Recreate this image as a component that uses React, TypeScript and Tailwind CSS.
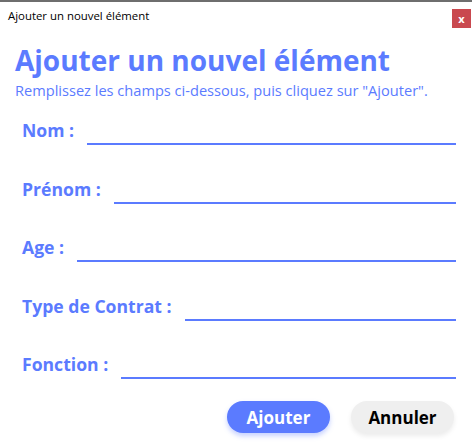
import React, { useState } from 'react';

interface Champ {
  key: string;
  label: string;
}

const champs: Champ[] = [
  { key: 'nom', label: 'Nom :' },
  { key: 'prenom', label: 'Prénom :' },
  { key: 'age', label: 'Age :' },
  { key: 'contrat', label: 'Type de Contrat :' },
  { key: 'fonction', label: 'Fonction :' },
];

export default function App() {
  const [valeurs, setValeurs] = useState<Record<string, string>>({});

  return (
    <div className="w-[472px] h-[446px] bg-white border-t-2 border-[#6e6e6e] font-['Open_Sans',sans-serif] overflow-hidden">
      {/* Barre de titre */}
      <div className="flex items-start justify-between h-[26px] pl-[8px] pr-[1px] pt-[7px]">
        <span className="text-[11.4px] leading-[14px] text-black">Ajouter un nouvel élément</span>
        <button className="w-[19px] h-[19px] bg-[#c9494f] text-white text-[11px] font-bold leading-none flex items-center justify-center">
          x
        </button>
      </div>

      <div className="px-[15px]">
        <h1 className="text-[28px] leading-[36px] font-bold text-[#5b7bff] mt-[14px]">Ajouter un nouvel élément</h1>
        <p className="text-[14.6px] leading-[18px] text-[#5b7bff] mt-[3px]">
          Remplissez les champs ci-dessous, puis cliquez sur "Ajouter".
        </p>

        <div className="flex flex-col gap-[36.6px] mt-[20px] pl-[7px] pr-[1px]">
          {champs.map((c) => (
            <div key={c.key} className="flex items-end gap-[13px] h-[22px]">
              <label className="text-[17.6px] leading-[22px] font-bold text-[#5b7bff] whitespace-nowrap">{c.label}</label>
              <input
                value={valeurs[c.key] ?? ''}
                onChange={(e) => setValeurs({ ...valeurs, [c.key]: e.target.value })}
                className="flex-1 border-b-2 border-[#5b7bff] outline-none text-[15px] mb-[-4px]"
              />
            </div>
          ))}
        </div>

        <div className="flex justify-end gap-[21px] mt-[26px] pr-[3px]">
          <button className="w-[103px] h-[32px] rounded-full bg-[#5b7bff] text-white text-[17px] font-bold shadow-[0_3px_5px_rgba(91,123,255,0.35)]">
            Ajouter
          </button>
          <button className="w-[103px] h-[32px] rounded-full bg-[#efefef] text-black text-[17px] font-bold shadow-[0_3px_5px_rgba(0,0,0,0.08)]">
            Annuler
          </button>
        </div>
      </div>
    </div>
  );
}
